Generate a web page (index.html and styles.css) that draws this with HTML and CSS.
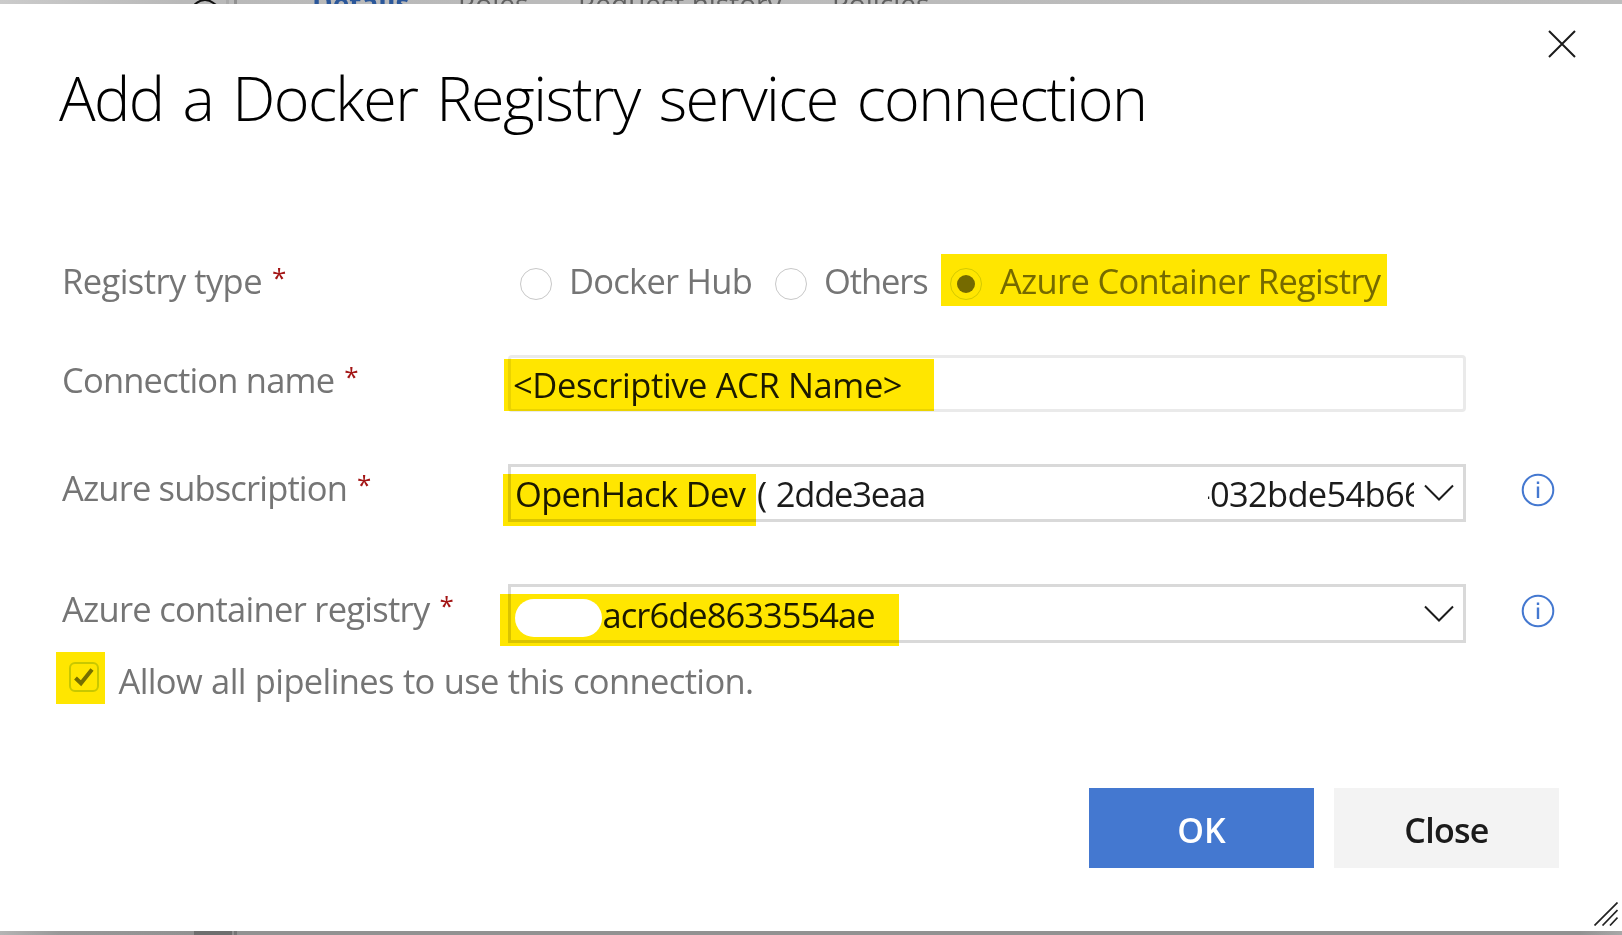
FILE: index.html
```html
<!DOCTYPE html>
<html lang="en">
<head>
<meta charset="utf-8">
<title>Add a Docker Registry service connection</title>
<link rel="stylesheet" href="styles.css">
</head>
<body>
<header class="backdrop">
  <svg class="collapse" width="24" height="24" viewBox="0 0 24 24"><path d="M0 5 Q11 -5 22 5" fill="none" stroke="#111" stroke-width="2"/></svg>
  <div class="gutter"></div>
  <nav class="tabs">
    <span class="tab tab-details">Details</span>
    <span class="tab tab-roles">Roles</span>
    <span class="tab tab-history">Request history</span>
    <span class="tab">Policies</span>
  </nav>
</header>
<main class="dialog">
  <div class="titlebar">
    <h1 class="title">Add a Docker Registry service connection</h1>
    <svg class="dismiss" width="28" height="28" viewBox="0 0 28 28"><path d="M1 1 27 27M27 1 1 27" fill="none" stroke="#1b1b1b" stroke-width="2"/></svg>
  </div>
  <form class="form">
    <div class="row row-type">
      <div class="label"><span class="label-type">Registry type</span><i class="req">*</i></div>
      <div class="radios">
        <span class="radio"></span><span class="option-hub">Docker Hub</span>
        <span class="radio radio-second"></span><span class="option-others">Others</span>
        <span class="choice"><span class="radio checked"></span><span class="option-acr">Azure Container Registry</span><b class="mark mark-type"></b></span>
      </div>
    </div>
    <div class="row row-name">
      <div class="label"><span class="label-name">Connection name</span><i class="req">*</i></div>
      <div class="field input"><span class="value-name">&lt;Descriptive ACR Name&gt;</span><b class="mark mark-name"></b></div>
    </div>
    <div class="row row-sub">
      <div class="label"><span class="label-sub">Azure subscription</span><i class="req">*</i></div>
      <div class="field select">
        <span class="value-sub">OpenHack Dev</span><span class="value-id">( 2dde3eaa</span><span class="value-tail"><span class="tail-text">-032bde54b66</span></span>
        <svg class="chevron" width="30" height="18" viewBox="0 0 30 18"><path d="M1 1.5 15 15.5 29 1.5" fill="none" stroke="#1b1b1b" stroke-width="2"/></svg>
        <b class="mark mark-sub"></b>
      </div>
      <svg class="info" width="34" height="34" viewBox="0 0 34 34"><circle cx="17" cy="17" r="15.3" fill="none" stroke="#4478d0" stroke-width="2"/><path d="M17 8.4v2.6M17 13.5v11.6" stroke="#4478d0" stroke-width="2.4"/></svg>
    </div>
    <div class="row row-reg">
      <div class="label"><span class="label-reg">Azure container registry</span><i class="req">*</i></div>
      <div class="field select">
        <span class="value-reg">acr6de8633554ae</span>
        <svg class="chevron" width="30" height="18" viewBox="0 0 30 18"><path d="M1 1.5 15 15.5 29 1.5" fill="none" stroke="#1b1b1b" stroke-width="2"/></svg>
        <b class="mark mark-reg"></b><b class="redaction"></b>
      </div>
      <svg class="info" width="34" height="34" viewBox="0 0 34 34"><circle cx="17" cy="17" r="15.3" fill="none" stroke="#4478d0" stroke-width="2"/><path d="M17 8.4v2.6M17 13.5v11.6" stroke="#4478d0" stroke-width="2.4"/></svg>
    </div>
    <div class="allow">
      <span class="tick"><svg width="30" height="30" viewBox="0 0 30 30"><rect x="1" y="1" width="28" height="28" rx="5" fill="none" stroke="#c8c800" stroke-width="2"/><path d="M6.5 16 12 21.3 23 7.5" fill="none" stroke="#756f00" stroke-width="4"/></svg></span>
      <span class="label-allow">Allow all pipelines to use this connection.</span>
    </div>
  </form>
  <div class="actions">
    <button class="btn primary">OK</button>
    <button class="btn">Close</button>
  </div>
  <svg class="grip" width="24" height="24" viewBox="0 0 24 24"><path d="M.5 23.5 23.5.5M8.5 23.5 23.5 8M16 23.5 23.5 15.5" fill="none" stroke="#222" stroke-width="1.7"/></svg>
</main>
<footer class="floor"><div class="floor-panel"></div><div class="floor-edge"></div></footer>
</body>
</html>
```
FILE: styles.css
```css
* { box-sizing: border-box; }
body { margin: 0; width: 1622px; height: 935px; overflow: hidden; background: #fff; font: 34.5px/48px "Open Sans", "Noto Sans", sans-serif; color: #1b1b1b; }
span { white-space: nowrap; }

/* Strip of the page that shows above the dialog */
.backdrop { height: 4px; overflow: hidden; display: flex; background: linear-gradient(90deg, #cbcbcb 0, #b9b9b9 180px, #bdbdbd 100%); }
.collapse { margin-left: 194px; flex: none; }
.gutter { margin-left: 8px; width: 11px; height: 4px; border-left: 3px solid #aaa; border-right: 3px solid #909090; flex: none; }
.tabs { display: flex; margin-left: 75px; margin-top: -21px; font-size: 28px; color: #606060; }
.tab-details { width: 146px; color: #2b579a; font-weight: 700; }
.tab-roles { width: 120px; }
.tab-history { width: 254px; }

.dialog { position: relative; height: 927px; display: flex; flex-direction: column; background: #fff; }
.titlebar { display: flex; justify-content: space-between; align-items: flex-start; height: 252px; padding: 26px 46px 0 59px; }
.title { margin: 26px 0 0; font-weight: 300; font-size: 61px; line-height: 84px; letter-spacing: -1.55px; word-spacing: 4.6px; color: #000; white-space: nowrap; }
.dismiss { flex: none; }

.form { display: block; margin: 0; }
.row { display: flex; padding-left: 62px; }
.label { flex: none; width: 446px; padding-top: 1px; color: #757575; display: flex; }
.row-sub .label { padding-top: 0; }
.req { font-style: normal; color: #a31515; font-size: 26px; line-height: 40px; margin-left: 10px; }
.row-type { height: 99px; }
.row-name { height: 109px; }
.row-sub { height: 120px; }
.row-reg { height: 68px; }
.label-type { letter-spacing: -.56px; }
.label-name { letter-spacing: -.8px; }
.label-sub { letter-spacing: -.84px; }
.label-reg { letter-spacing: -.72px; }

.radios { display: flex; color: #757575; padding-left: 12px; line-height: 50px; }
.radio { flex: none; width: 32px; height: 32px; margin-top: 12px; border: 1px solid #c8c8c8; border-radius: 50%; }
.radio-second { margin-left: 23px; }
.option-hub { margin-left: 17px; width: 183px; letter-spacing: -.75px; }
.option-others { margin-left: 17px; width: 102px; letter-spacing: -1.1px; }
.choice { position: relative; display: flex; margin-left: 24px; }
.checked { display: grid; place-items: center; border-color: #d4e0d4; }
.checked::after { content: ""; width: 18px; height: 18px; border-radius: 50%; background: #757575; }
.option-acr { margin-left: 18px; letter-spacing: -.7px; }

.field { position: relative; flex: none; width: 958px; display: flex; line-height: 50px; }
.input { height: 57px; border: 3px solid #eaeaea; border-radius: 4px; padding: 2px 0 0 2px; }
.select { height: 59px; border: 3px solid #d9d9d9; padding: 3px 9px 0 4px; }
.row-sub .select { height: 58px; padding-top: 2px; }
.value-name { letter-spacing: -.38px; }
.value-sub { width: 242px; letter-spacing: -.67px; }
.value-id { width: 173px; letter-spacing: -1.2px; word-spacing: 2px; }
.value-tail { margin-left: 278px; width: 206px; overflow: hidden; height: 50px; }
.tail-text { display: block; margin-left: -8.5px; letter-spacing: -.7px; }
.value-reg { margin-left: 87.5px; letter-spacing: -.97px; }
.chevron { flex: none; margin: 15px 0 0 auto; }
.info { flex: none; margin: 9px 0 0 55px; }
.row-reg .info { margin-top: 10px; }

/* Highlighter strokes tint whatever they cover */
.mark { position: absolute; background: #ffe600; mix-blend-mode: multiply; height: 52px; }
.mark-type { left: -9px; top: -2px; width: 446px; }
.mark-name { left: -7px; top: 1px; width: 430px; }
.mark-sub { left: -8px; top: 7px; width: 253px; }
.mark-reg { left: -11px; top: 7px; width: 399px; }
.redaction { position: absolute; left: 4px; top: 12px; width: 87px; height: 38px; border-radius: 19px; background: #fff; }

.allow { display: flex; padding-left: 56px; color: #757575; height: 136px; }
.tick { width: 49px; height: 52px; padding: 10px 0 0 13px; background: #ffe600; line-height: 0; }
.label-allow { margin: 5px 0 0 13.5px; letter-spacing: -.63px; word-spacing: .7px; }

.actions { display: flex; gap: 20px; justify-content: flex-end; padding-right: 63px; }
.btn { width: 225px; height: 80px; padding: 4px 0 0; border: 0; background: #f3f3f3; color: #1b1b1b; font: 600 34px/48px "Open Sans", "Noto Sans", sans-serif; letter-spacing: -.7px; }
.primary { background: #4478d0; color: #fff; letter-spacing: 0; }
.grip { position: absolute; right: 4px; bottom: 5px; }

/* Strip of the page that shows below the dialog */
.floor { height: 4px; display: flex; background: linear-gradient(90deg, #b4b4b4 0, #989898 60px, #929292 190px, #929292 1580px, #a8a8a8 100%); }
.floor-panel { margin-left: 194px; width: 38px; background: #6e6e6e; }
.floor-edge { margin-left: 2px; width: 3px; background: #757575; }
```
